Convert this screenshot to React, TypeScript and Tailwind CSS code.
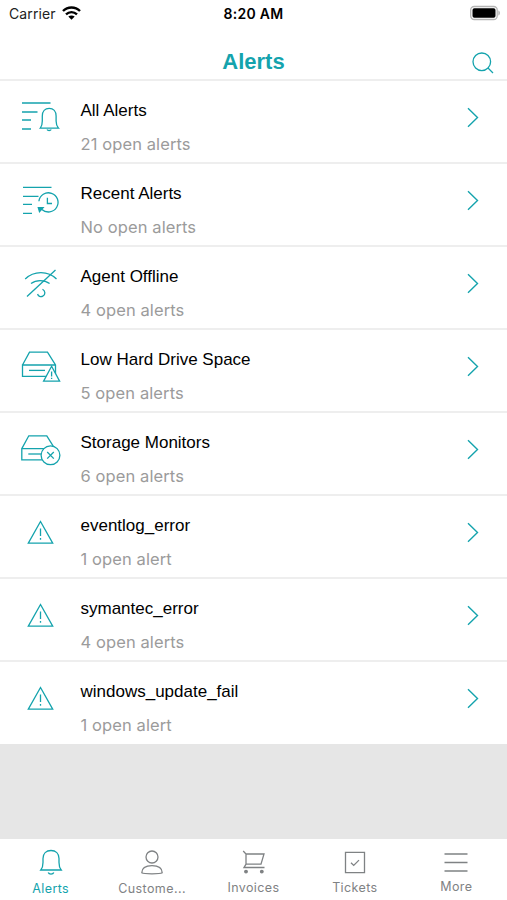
import React from 'react'

type Tab = { label: string; icon: React.ReactNode; active?: boolean; className: string }

const ListLines = ({ y = 7, x = 4 }) => (
  <path
    d={`M${x} ${y}h28.5M${x} ${y + 9}h15.5M${x} ${y + 17}h9M${x} ${y + 26}h9`}
  />
)

const AllAlertsIcon = () => (
  <>
    <ListLines />
    <path d="M22.3 32.2c1.7-2 2-4 2-7.2v-5c0-4.500 2.700-7.700 6.900-7.700s6.900 3.200 6.900 7.700v5c0 3.200.5 5.200 2.400 7.200z" />
    <path d="M29 33.500c.7 1.300 3.500 1.300 4.200 0" />
  </>
)

const RecentIcon = () => (
  <>
    <ListLines x={5} y={8.4} />
    <path d="M20.900 22.300a9.600 9.600 0 1 1 3 8.100" />
    <path d="M29.400 18.800v5.700h4.600" />
    <path d="M20.300 28.600h4.800l-3.600 4z" className="fill-[#14a3ad]" />
  </>
)

const OfflineIcon = () => (
  <>
    <path d="M7.200 17c8.500-8.600 23-8.600 31.300 0" />
    <path d="M13 21.600c5.200-4 13.200-4 18.600 0" />
    <path d="M24.500 27.200c3 1.700 3.200 5.500.3 7-2.200 1.100-4.600 0-5.200-2.200" />
    <path d="M9 34.500 37.500 8" />
  </>
)

const Drive = () => (
  <>
    <path d="M4.500 20 11.500 7.200h18L37.500 20v11.300h-33V20h33" />
    <path d="M11 25.400h16" />
  </>
)

const LowSpaceIcon = () => (
  <>
    <Drive />
    <path d="m33.600 21.300 8 14.800H25.600z" className="fill-white" />
    <path d="M33.600 26.500v5M33.600 32.800v1.200" />
  </>
)

const StorageIcon = () => (
  <>
    <g transform="translate(-.7 .6)">
      <Drive />
    </g>
    <circle cx="32.500" cy="27.300" r="9.400" className="fill-white" />
    <path d="m29.200 24 6.600 6.600M35.800 24l-6.600 6.600" />
  </>
)

const WarningIcon = () => (
  <>
    <path d="m22.500 10.500 12.200 21.700H10.300z" />
    <path d="M22.500 17.500v7.500M22.500 27v1.800" />
  </>
)

const alerts = [
  { title: 'All Alerts', count: '21 open alerts', icon: <AllAlertsIcon /> },
  { title: 'Recent Alerts', count: 'No open alerts', icon: <RecentIcon /> },
  { title: 'Agent Offline', count: '4 open alerts', icon: <OfflineIcon /> },
  { title: 'Low Hard Drive Space', count: '5 open alerts', icon: <LowSpaceIcon /> },
  { title: 'Storage Monitors', count: '6 open alerts', icon: <StorageIcon /> },
  { title: 'eventlog_error', count: '1 open alert', icon: <WarningIcon /> },
  { title: 'symantec_error', count: '4 open alerts', icon: <WarningIcon /> },
  { title: 'windows_update_fail', count: '1 open alert', icon: <WarningIcon /> },
]

const tabs: Tab[] = [
  {
    label: 'Alerts',
    active: true,
    className: 'pt-[42px]',
    icon: (
      <>
        <path d="M4.800 23c1.900-2.300 2.200-4.300 2.200-7.500v-4C7 6.700 10.200 3.500 15 3.500s8 3.200 8 8v4c0 3.200.3 5.200 2.200 7.500z" />
        <path d="M12.200 25.500c.8 2.100 4.800 2.100 5.600 0" />
      </>
    ),
  },
  {
    label: 'Custome...',
    className: 'pt-[42px]',
    icon: (
      <>
        <circle cx="15" cy="10" r="6" />
        <path d="M4.800 25.800c0-4.800 3.900-7.200 10.200-7.200s10.200 2.400 10.200 7.200c-2 1.300-18.400 1.300-20.400 0z" />
      </>
    ),
  },
  {
    label: 'Invoices',
    className: 'pt-[41px]',
    icon: (
      <>
        <path d="M5.200 4 8 7v10.200l-2 3.300h20.500M8 7h18l-3 10.200H8" />
        <circle cx="8" cy="24.600" r="1.300" className="fill-[#7f8284]" />
        <circle cx="23.800" cy="24.600" r="1.300" className="fill-[#7f8284]" />
      </>
    ),
  },
  {
    label: 'Tickets',
    className: 'pt-[41px]',
    icon: (
      <>
        <path d="M5.500 5.300h19v20.400h-19z" />
        <path d="m11 15.800 2.700 2.600 5.300-5.300" />
      </>
    ),
  },
  {
    label: 'More',
    className: 'pt-[39.500px]',
    icon: <path d="M3.500 7h23M3.500 15.500h23M3.500 24h23" />,
  },
]

const StatusBar = () => (
  <div className="grid h-[26px] grid-cols-3 items-center text-[14px] text-[#222]">
    <div className="flex items-center gap-1.5 pl-[9px]">
      <span className="tracking-[0.1px]">Carrier</span>
      <svg width="19" height="14" viewBox="0 0 19 14" fill="none" stroke="#000" strokeWidth="2.400">
        <path d="M1 5C5.700.3 13.300.3 18 5M4 8.400c3.200-3 7.800-3 11 0" />
        <path d="M9.500 13.800 6.300 10.600c1.800-1.600 4.600-1.600 6.400 0z" fill="#000" stroke="none" />
      </svg>
    </div>
    <div className="text-center font-semibold tracking-[0.3px] text-black">8:20 AM</div>
    <div className="flex items-center justify-end pr-[6px]">
      <svg width="32" height="16" viewBox="0 0 32 16">
        <rect x="1.700" y="1.500" width="26.500" height="13" rx="3.500" fill="#fff" stroke="#b5b5b5" strokeWidth="1.300" />
        <rect x="3.500" y="3.300" width="23" height="9.400" rx="1.800" fill="#000" />
        <path d="M29.300 5.500c2.200.6 2.200 4.400 0 5z" fill="#b5b5b5" />
      </svg>
    </div>
  </div>
)

export default function App() {
  return (
    <div className="flex h-[900px] w-[507px] flex-col bg-[#e6e6e6] font-['Inter',sans-serif]">
      <header className="h-[81px] border-b-2 border-[#eeeeee] bg-white">
        <StatusBar />
        <div className="grid h-[53px] grid-cols-3 items-center pt-[19px]">
          <span />
          <h1 className="text-center font-['Liberation_Sans',sans-serif] text-[22px] leading-[34px] font-bold text-[#14a3ad]">
            Alerts
          </h1>
          <svg
            className="mt-0.5 mr-3 justify-self-end"
            width="24"
            height="24"
            viewBox="0 0 24 24"
            fill="none"
            stroke="#14a3ad"
            strokeWidth="1.300"
          >
            <circle cx="10.800" cy="10.800" r="8.800" />
            <path d="m17 17 5 5" />
          </svg>
        </div>
      </header>

      <main className="flex-1">
        {alerts.map((alert) => (
          <div
            key={alert.title}
            className="flex h-[83px] border-b-2 border-[#eeeeee] bg-white pl-[18px] last:h-[82px] last:border-white"
          >
            <svg
              className="mt-[15px] shrink-0"
              width="44"
              height="44"
              viewBox="0 0 44 44"
              fill="none"
              stroke="#14a3ad"
              strokeWidth="1.300"
            >
              {alert.icon}
            </svg>
            <div className="flex-1 pt-[19px] pl-[18.500px]">
              <div className="font-['Liberation_Sans',sans-serif] text-[17px] leading-[22px] text-black">
                {alert.title}
              </div>
              <div className="mt-[11px] text-[16.500px] leading-[22px] tracking-[0.100px] text-[#9b9b9b]">
                {alert.count}
              </div>
            </div>
            <svg
              className="mt-[25px] mr-[26px]"
              width="16"
              height="24"
              viewBox="0 0 16 24"
              fill="none"
              stroke="#14a3ad"
              strokeWidth="1.400"
            >
              <path d="m3 2.300 9.500 9.200L3 20.700" />
            </svg>
          </div>
        ))}
      </main>

      <nav className="grid h-[61px] grid-cols-5 bg-white">
        {tabs.map((tab) => (
          <div
            key={tab.label}
            className={`relative text-center text-[12.500px] leading-4 tracking-[0.400px] ${tab.className} ${tab.active ? 'text-[#14a3ad]' : 'text-[#7f8284]'}`}
          >
            <svg
              className="absolute top-2 left-1/2 -translate-x-1/2"
              width="30"
              height="30"
              viewBox="0 0 30 30"
              fill="none"
              stroke="currentColor"
              strokeWidth="1.300"
            >
              {tab.icon}
            </svg>
            {tab.label}
          </div>
        ))}
      </nav>
    </div>
  )
}
